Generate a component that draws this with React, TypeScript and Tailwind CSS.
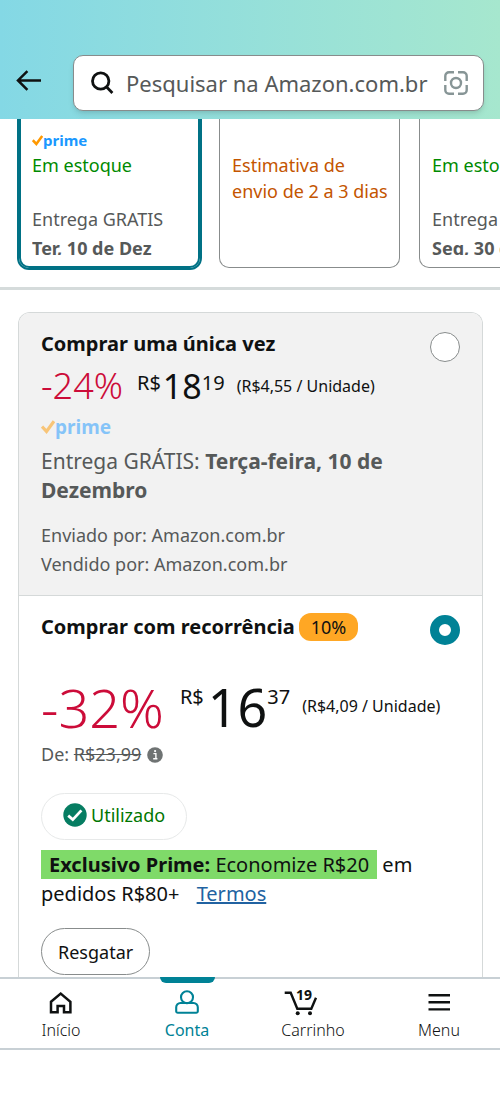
import React from "react";

function PrimeBadge({ large = false }: { large?: boolean }) {
  return (
    <span className={large ? "flex items-center opacity-50" : "flex items-center"}>
      <svg viewBox="0 0 14 14" className={large ? "w-3.5 h-3.5" : "w-[11px] h-[11px]"} fill="none" stroke="#ff9900" strokeWidth="3.2">
        <path d="M1 6.6 L5.5 11.4 L13 1.2" />
      </svg>
      <span className={large ? "text-[19px] leading-6 font-bold text-[#1a98ff]" : "text-[15px] leading-6 font-bold text-[#1a98ff]"}>prime</span>
    </span>
  );
}

function HomeIcon() {
  return (
    <svg viewBox="0 0 24 24" className="w-6 h-6" fill="none" stroke="#0f1111" strokeWidth="2.5">
      <path d="M2 11.8 L11.7 3.6 L21.4 11.8 V22.2 H15 V16 H8.6 V22.2 H2 Z" />
    </svg>
  );
}

function UserIcon() {
  return (
    <svg viewBox="0 0 24 24" className="w-6 h-6" fill="none" stroke="#008296" strokeWidth="2.1">
      <circle cx="12" cy="7.3" r="6" />
      <path d="M5.4 13 H18.6 A4.2 4.2 0 0 1 22.8 17.2 V21.2 A1.6 1.6 0 0 1 21.2 22.8 H2.8 A1.6 1.6 0 0 1 1.2 21.2 V17.2 A4.2 4.2 0 0 1 5.4 13 Z" />
    </svg>
  );
}

function CartIcon({ count }: { count: number }) {
  return (
    <svg viewBox="0 0 34 28" className="w-[34px] h-7 -my-0.5 -ml-6" fill="none">
      <path d="M0.7 4.7 H6.7 L13.3 20.7 H27.3 L32 9.7" stroke="#0f1111" strokeWidth="2.4" />
      <circle cx="13.7" cy="25.3" r="2" fill="#0f1111" />
      <circle cx="26" cy="25.3" r="2" fill="#0f1111" />
      <text x="12" y="11.5" fill="#0f1111" className="text-sm font-bold">{count}</text>
    </svg>
  );
}

function MenuIcon() {
  return (
    <svg viewBox="0 0 24 24" className="w-6 h-6" stroke="#0f1111" strokeWidth="2.4">
      <path d="M1.5 5.3 H23 M1.5 12.3 H23 M1.5 19.4 H23" />
    </svg>
  );
}

const tabs = [
  { label: "Início", icon: <HomeIcon />, active: false },
  { label: "Conta", icon: <UserIcon />, active: true },
  { label: "Carrinho", icon: <CartIcon count={19} />, active: false },
  { label: "Menu", icon: <MenuIcon />, active: false },
];

export default function App() {
  return (
    <div className="min-h-screen bg-white text-[#0f1111] font-['Noto_Sans',sans-serif] overflow-hidden">

      {/* Header */}
      <header className="flex items-center pt-[55px] pb-2 pl-4 pr-4 bg-gradient-to-r from-[#84d8e5] to-[#a6e7ce]">
        <button aria-label="Voltar" className="w-[57px] shrink-0 pb-1.5">
          <svg viewBox="0 0 26 21" className="w-[26px] h-[21px]" fill="none" stroke="#0f1111" strokeWidth="2.5">
            <path d="M25 10.4 H2 M11.4 1.2 L2 10.4 L11.4 19.8" />
          </svg>
        </button>
        <label className="flex flex-1 min-w-0 items-center h-14 pl-4 pr-3.5 bg-white border border-[#888c8c] rounded-[10px] shadow-md">
          <svg viewBox="0 0 24 24" className="w-6 h-6 shrink-0" fill="none" stroke="#0f1111" strokeWidth="2.8">
            <circle cx="10.7" cy="10" r="8.2" />
            <path d="M16.4 15.8 L22.4 22" />
          </svg>
          <input
            type="text"
            aria-label="Pesquisar"
            placeholder="Pesquisar na Amazon.com.br"
            className="flex-1 min-w-0 ml-3 text-[22px] leading-8 placeholder:text-[#565959] outline-none"
          />
          <svg viewBox="0 0 26 26" className="w-[26px] h-[26px] shrink-0" fill="none" stroke="#879596" strokeWidth="2.4">
            <circle cx="13" cy="13" r="5" />
            <path d="M11 2.3 H6 A3.7 3.7 0 0 0 2.3 6 V11 M15 2.3 H20 A3.7 3.7 0 0 1 23.7 6 V11 M11 23.7 H6 A3.7 3.7 0 0 1 2.3 20 V15 M15 23.7 H20 A3.7 3.7 0 0 0 23.7 20 V15" />
          </svg>
        </label>
      </header>

      {/* Offer cards */}
      <section className="flex gap-[19px] pl-[19px] pb-[19px] overflow-hidden border-b-[3px] border-[#d5dbdb] text-lg leading-[26px]">
        <div className="w-[181px] shrink-0 pt-[9px] pb-[11px] pl-[11px] border-2 border-t-0 border-[#007185] ring-2 ring-[#007185] rounded-b-[10px]">
          <PrimeBadge />
          <p className="text-[#008a00]">Em estoque</p>
          <p className="mt-7 text-[#565959]">Entrega GRATIS</p>
          <p className="mt-[3px] h-5 overflow-hidden font-bold text-[#565959]">Ter, 10 de Dez</p>
        </div>
        <div className="w-[181px] shrink-0 pt-[33px] pl-3 border border-t-0 border-[#888c8c] rounded-b-[10px] text-[#c45500]">
          <p>Estimativa de<br />envio de 2 a 3 dias</p>
        </div>
        <div className="w-[181px] shrink-0 pt-[33px] pl-3 border border-t-0 border-[#888c8c] rounded-b-[10px]">
          <p className="text-[#008a00]">Em estoque</p>
          <p className="mt-7 text-[#565959]">Entrega GRATIS</p>
          <p className="mt-[3px] h-5 overflow-hidden font-bold text-[#565959]">Seg, 30 de Dez</p>
        </div>
      </section>

      {/* Buying options */}
      <main className="pt-[22px] pl-[18px] pr-[17px]">
        <div className="border border-b-0 border-[#d5d9d9] rounded-t-xl overflow-hidden">

          <section className="pt-4 pb-4 px-[22px] bg-[#f2f2f2] border-b border-[#d5d9d9]">
            <div className="flex items-start justify-between">
              <label htmlFor="once" className="text-xl leading-[30px] font-bold">Comprar uma única vez</label>
              <input id="once" name="purchase" type="radio" className="appearance-none w-[30px] h-[30px] mt-[3px] -mb-[3px] shrink-0 rounded-full bg-white border border-[#888c8c]" />
            </div>
            <div className="flex items-start pt-1">
              <span className="text-4xl leading-[46px] font-light text-[#cc0c39]">-24%</span>
              <span className="ml-3.5 pt-1.5 text-xl leading-7">R$</span>
              <span className="ml-0.5 text-[34px] leading-[46px]">18</span>
              <span className="pt-1.5 text-xl leading-7">19</span>
              <span className="ml-3 pt-[11px] text-base leading-6">(R$4,55 / Unidade)</span>
            </div>
            <div className="pt-1.5">
              <PrimeBadge large />
            </div>
            <p className="pt-2 text-[21px] leading-[29px] text-[#565959]">
              Entrega GRÁTIS: <strong>Terça-feira, 10 de Dezembro</strong>
            </p>
            <p className="pt-4 text-lg leading-[29px] text-[#565959]">
              Enviado por: Amazon.com.br<br />
              Vendido por: Amazon.com.br
            </p>
          </section>

          <section className="pt-4 pb-0.5 px-[22px]">
            <div className="flex items-center">
              <label htmlFor="recurring" className="text-xl leading-[30px] font-bold">Comprar com recorrência</label>
              <span className="ml-1 px-3 rounded-xl bg-[#ffa724] text-lg leading-7">10%</span>
              <input id="recurring" name="purchase" type="radio" defaultChecked className="appearance-none ml-auto mt-[3px] -mb-[3px] w-[30px] h-[30px] shrink-0 rounded-full bg-white border-[9px] border-[#008296]" />
            </div>
            <div className="flex items-start pt-8">
              <span className="text-[54px] leading-[66px] font-light text-[#cc0c39]">-32%</span>
              <span className="ml-4 pt-[9px] text-xl leading-7">R$</span>
              <span className="ml-1 text-[52px] leading-[66px]">16</span>
              <span className="pt-[9px] text-xl leading-7">37</span>
              <span className="ml-3 pt-5 text-base leading-6">(R$4,09 / Unidade)</span>
            </div>
            <p className="flex items-center text-lg leading-[29px] text-[#565959]">
              De:&nbsp;<s>R$23,99</s>
              <svg viewBox="0 0 16 16" className="w-4 h-4 ml-1.5">
                <circle cx="8" cy="8" r="7.8" fill="#6f7373" />
                <path d="M6.4 6.6 H8.9 V11.4 M6.2 11.8 H10.4" fill="none" stroke="#fff" strokeWidth="1.4" />
                <circle cx="8.1" cy="4.1" r="1.1" fill="#fff" />
              </svg>
            </p>
            <div className="mt-6 inline-flex items-center h-[47px] pb-[3px] px-[21px] border border-[#e7e9e9] rounded-full">
              <svg viewBox="0 0 24 24" className="w-6 h-6">
                <circle cx="12" cy="12" r="11.7" fill="#067d62" />
                <path d="M5.2 12.6 L9.8 16.6 L18.4 7.4" fill="none" stroke="#fff" strokeWidth="2.8" />
              </svg>
              <span className="ml-1 text-lg leading-7 text-[#007600]">Utilizado</span>
            </div>
            <p className="pt-2.5 text-xl leading-[29px]">
              <span className="bg-[#7fda69] py-px px-2"><b>Exclusivo Prime:</b> Economize R$20</span> em
              pedidos R$80+ <a href="#termos" className="ml-3 text-[#2162a1] underline">Termos</a>
            </p>
            <button className="mt-5 h-[47px] px-4 border border-[#888c8c] rounded-full text-lg">Resgatar</button>
          </section>
        </div>
      </main>

      {/* Bottom navigation */}
      <nav className="border-y-2 border-[#c8d0d5]">
        <div className="grid grid-cols-4 -mx-0.5">
          {tabs.map((tab) => (
            <a key={tab.label} href="#" className="relative flex flex-col items-center pt-[11px] pb-1.5">
              {tab.active && <span className="absolute -top-0.5 w-[55px] h-1.5 rounded-b-md bg-[#008296]" />}
              {tab.icon}
              <span className={tab.active ? "mt-1 text-base leading-6 text-[#008296]" : "mt-1 text-base leading-6 font-light"}>{tab.label}</span>
            </a>
          ))}
        </div>
      </nav>
    </div>
  );
}
